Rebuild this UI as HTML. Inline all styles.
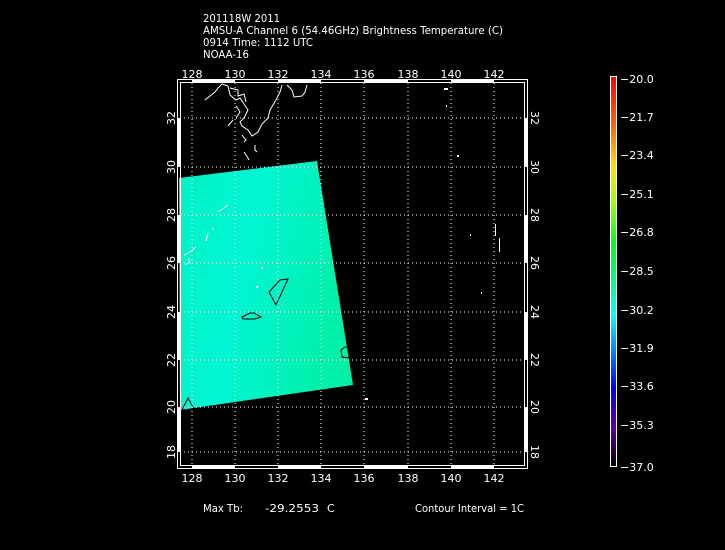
<!DOCTYPE html>
<html><head><style>
html,body{margin:0;padding:0;background:#000;}
body{width:725px;height:550px;overflow:hidden;position:relative;font-family:"DejaVu Sans","Liberation Sans",sans-serif;}
svg{position:absolute;left:0;top:0}
svg text{font-family:"DejaVu Sans","Liberation Sans",sans-serif;font-size:11px;fill:#fff}
</style></head><body>
<svg width="725" height="550" viewBox="0 0 725 550">
<defs>
<linearGradient id="sw" x1="0" y1="0" x2="1" y2="0.3">
<stop offset="0" stop-color="#00f2c4"/>
<stop offset="0.45" stop-color="#00f5d4"/>
<stop offset="1" stop-color="#00f0a8"/>
</linearGradient>
<linearGradient id="cb" x1="0" y1="0" x2="0" y2="1">
<stop offset="0" stop-color="#ff0000"/>
<stop offset="0.13" stop-color="#ff6a00"/>
<stop offset="0.23" stop-color="#ffe000"/>
<stop offset="0.32" stop-color="#a0ff00"/>
<stop offset="0.43" stop-color="#00ff20"/>
<stop offset="0.53" stop-color="#00ff90"/>
<stop offset="0.61" stop-color="#00ffff"/>
<stop offset="0.72" stop-color="#0070ff"/>
<stop offset="0.8" stop-color="#0000f0"/>
<stop offset="0.9" stop-color="#6000a0"/>
<stop offset="1" stop-color="#000000"/>
</linearGradient>
</defs>
<text x="203" y="22" textLength="77" lengthAdjust="spacingAndGlyphs">201118W 2011</text>
<text x="203" y="34" textLength="300" lengthAdjust="spacingAndGlyphs">AMSU-A Channel 6 (54.46GHz) Brightness Temperature (C)</text>
<text x="203" y="46" textLength="110" lengthAdjust="spacingAndGlyphs">0914 Time: 1112 UTC</text>
<text x="203" y="58" textLength="46" lengthAdjust="spacingAndGlyphs">NOAA-16</text>

<polygon points="179,178 317,161 353,385 180,410" fill="url(#sw)"/>
<g fill="none" stroke="#000" stroke-width="1">
<path d="M269,292 L280,280 L288,279 L276,305 Z"/>
<path d="M242,317 L250,313 L254,313 L261,317 L255,319 L243,319 Z"/>
<path d="M341,350 L345,347 L348,347 L350,358 L342,357 Z"/>
<path d="M182,410 L188,398 L194,409"/>
</g>
<g stroke="#fff" stroke-width="1" stroke-dasharray="1,3">
<path d="M192,83V465M235,83V465M278,83V465M321,83V465M364,83V465M408,83V465M451,83V465M494,83V465"/>
<path d="M180,118H525M180,167H525M180,215H525M180,263H525M180,312H525M180,360H525M180,407H525M180,452H525"/>
</g>
<g fill="none" stroke="#fff" stroke-width="1">
<path d="M205,100 L210,96 L215,92 L218,88 L222,84 L228,86 L230,95 L236,100 L240,98 L244,104 L248,110 L244,118 L240,122 L242,126 L248,130 L252,136 L258,132 L262,124 L268,118 L270,110 L276,100 L280,92 L282,85"/>
<path d="M230,88 L238,90 L238,96 L244,94 L246,102"/>
<path d="M236,106 L240,112 L236,118"/>
<path d="M242,135 L246,140 L244,142"/>
<path d="M287,85 L292,90 L294,97 L302,96 L305,92 L307,85"/>
<path d="M255,145 L255,150 L257,152"/>
<path d="M244,152 L248,158 L249,160"/>
<path d="M233,120 L228,126"/>
<path d="M218,212 L224,208 L228,205"/>
<path d="M212,228 L214,230"/>
<path d="M188,258 L190,262 L185,265"/>
<path d="M184,255 L190,252 L196,247"/>
<path d="M206,241 L208,233"/>
</g>
<g fill="#fff">
<rect x="444" y="88" width="4" height="2"/>
<rect x="446" y="105" width="1" height="2"/>
<rect x="457" y="155" width="2" height="2"/>
<rect x="470" y="234" width="1" height="2"/>
<rect x="481" y="292" width="1" height="2"/>
<rect x="365" y="398" width="3" height="2"/>
<rect x="495" y="224" width="1" height="12"/>
<rect x="499" y="238" width="1" height="14"/>
<rect x="261" y="267" width="2" height="2"/>
<rect x="256" y="286" width="2" height="2"/>
</g>
<g fill="none" stroke="#fff">
<rect x="177.5" y="79.5" width="350" height="389"/>
<rect x="180.5" y="82.5" width="344" height="383"/>
</g>
<g fill="#fff">
<rect x="192" y="80" width="43" height="3"/><rect x="278" y="80" width="43" height="3"/><rect x="364" y="80" width="44" height="3"/><rect x="451" y="80" width="43" height="3"/>
<rect x="192" y="466" width="43" height="3"/><rect x="278" y="466" width="43" height="3"/><rect x="364" y="466" width="44" height="3"/><rect x="451" y="466" width="43" height="3"/>
<rect x="178" y="118" width="3" height="49"/><rect x="178" y="215" width="3" height="48"/><rect x="178" y="312" width="3" height="48"/><rect x="178" y="407" width="3" height="45"/>
<rect x="525" y="118" width="3" height="49"/><rect x="525" y="215" width="3" height="48"/><rect x="525" y="312" width="3" height="48"/><rect x="525" y="407" width="3" height="45"/>
</g>
<g text-anchor="middle">
<text x="192" y="78">128</text><text x="235" y="78">130</text><text x="278" y="78">132</text><text x="321" y="78">134</text><text x="364" y="78">136</text><text x="408" y="78">138</text><text x="451" y="78">140</text><text x="494" y="78">142</text>
<text x="192" y="482">128</text><text x="235" y="482">130</text><text x="278" y="482">132</text><text x="321" y="482">134</text><text x="364" y="482">136</text><text x="408" y="482">138</text><text x="451" y="482">140</text><text x="494" y="482">142</text>
</g>
<g text-anchor="middle">
<text transform="translate(175,118) rotate(-90)">32</text>
<text transform="translate(175,167) rotate(-90)">30</text>
<text transform="translate(175,215) rotate(-90)">28</text>
<text transform="translate(175,263) rotate(-90)">26</text>
<text transform="translate(175,312) rotate(-90)">24</text>
<text transform="translate(175,360) rotate(-90)">22</text>
<text transform="translate(175,407) rotate(-90)">20</text>
<text transform="translate(175,452) rotate(-90)">18</text>
<text transform="translate(531,118) rotate(90)">32</text>
<text transform="translate(531,167) rotate(90)">30</text>
<text transform="translate(531,215) rotate(90)">28</text>
<text transform="translate(531,263) rotate(90)">26</text>
<text transform="translate(531,312) rotate(90)">24</text>
<text transform="translate(531,360) rotate(90)">22</text>
<text transform="translate(531,407) rotate(90)">20</text>
<text transform="translate(531,452) rotate(90)">18</text>
</g>
<text x="203" y="512" textLength="40" lengthAdjust="spacingAndGlyphs">Max Tb:</text>
<text x="265" y="512" textLength="54" lengthAdjust="spacingAndGlyphs">-29.2553</text>
<text x="327" y="512">C</text>
<text x="415" y="512" textLength="109" lengthAdjust="spacingAndGlyphs">Contour Interval = 1C</text>
<rect x="610.5" y="76.5" width="6" height="390" fill="url(#cb)" stroke="#fff"/>
<g>
<text x="620" y="83">−20.0</text>
<text x="620" y="121">−21.7</text>
<text x="620" y="159">−23.4</text>
<text x="620" y="198">−25.1</text>
<text x="620" y="236">−26.8</text>
<text x="620" y="275">−28.5</text>
<text x="620" y="314">−30.2</text>
<text x="620" y="352">−31.9</text>
<text x="620" y="390">−33.6</text>
<text x="620" y="429">−35.3</text>
<text x="620" y="471">−37.0</text>
</g>
</svg>
</body></html>
